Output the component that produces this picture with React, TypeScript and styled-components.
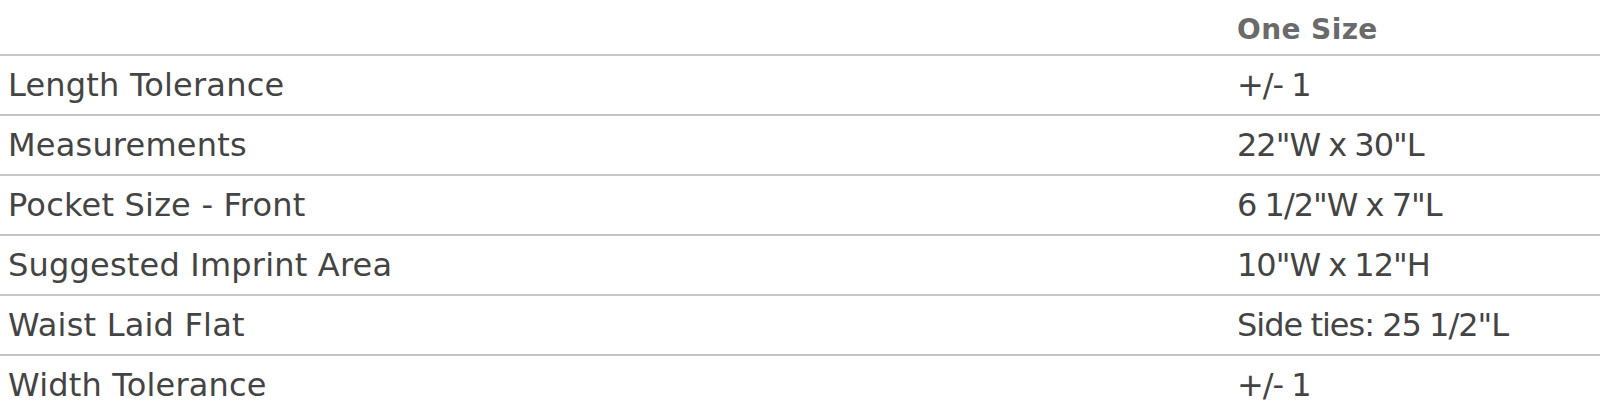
import React from 'react'
import styled, { createGlobalStyle } from 'styled-components'

const GlobalStyle = createGlobalStyle`
  html, body {
    margin: 0;
    padding: 0;
    background: #fff;
  }
  body {
    font-family: "DejaVu Sans", "Liberation Sans", sans-serif;
  }
`

const rows: [string, string][] = [
  ['Length Tolerance', '+/- 1'],
  ['Measurements', '22"W x 30"L'],
  ['Pocket Size - Front', '6 1/2"W x 7"L'],
  ['Suggested Imprint Area', '10"W x 12"H'],
  ['Waist Laid Flat', 'Side ties: 25 1/2"L'],
  ['Width Tolerance', '+/- 1'],
]

const Table = styled.table`
  width: 100%;
  border-collapse: collapse;
  table-layout: fixed;
`

const HeadCell = styled.th<{ $first?: boolean }>`
  height: 55px;
  padding: 5px 0 0 ${(p) => (p.$first ? '8px' : '0')};
  width: ${(p) => (p.$first ? '1237px' : 'auto')};
  text-align: left;
  vertical-align: middle;
  font-size: 28px;
  font-weight: 600;
  letter-spacing: 0.4px;
  color: #6a6a6a;
  border-bottom: 2px solid #c6c6c6;
  box-sizing: border-box;
`

const Row = styled.tr`
  border-bottom: 2px solid #c6c6c6;
  &:last-child {
    border-bottom: none;
  }
`

const Cell = styled.td<{ $first?: boolean }>`
  height: 58px;
  padding: 0 0 0 ${(p) => (p.$first ? '8px' : '0')};
  vertical-align: middle;
  font-size: 32px;
  letter-spacing: ${(p) => (p.$first ? '0.2px' : '-1px')};
  word-spacing: ${(p) => (p.$first ? '0' : '-1px')};
  color: #444;
  white-space: nowrap;
`

export default function App() {
  return (
    <>
      <GlobalStyle />
      <Table>
        <thead>
          <tr>
            <HeadCell $first />
            <HeadCell>One Size</HeadCell>
          </tr>
        </thead>
        <tbody>
          {rows.map(([label, value]) => (
            <Row key={label}>
              <Cell $first>{label}</Cell>
              <Cell>{value}</Cell>
            </Row>
          ))}
        </tbody>
      </Table>
    </>
  )
}
